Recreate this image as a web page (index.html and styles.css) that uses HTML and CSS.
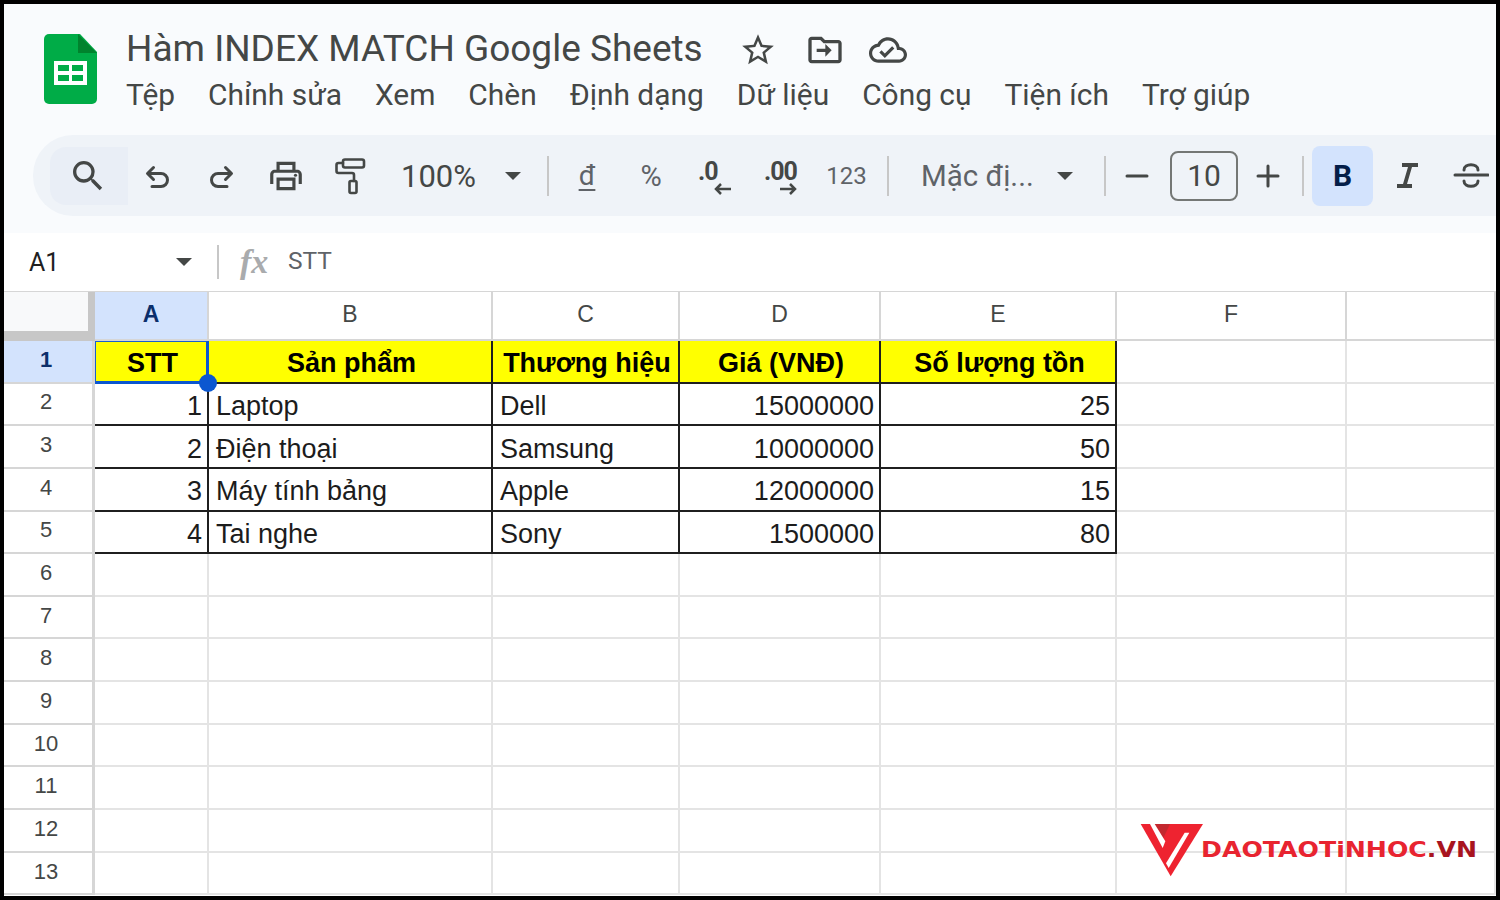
FILE: index.html
```html
<!DOCTYPE html>
<html lang="vi">
<head>
<meta charset="utf-8">
<title>Hàm INDEX MATCH Google Sheets</title>
<link rel="stylesheet" href="styles.css">
</head>
<body>
<div class="frame">
  <header class="head">
    <svg class="logo" viewBox="0 0 53 70"><path fill="#00ac47" d="M5 0h31l17 18v47a5 5 0 0 1-5 5H5a5 5 0 0 1-5-5V5a5 5 0 0 1 5-5z"/><path fill="#00832d" d="M34 0l19 19H34z"/><path fill="#fff" d="M10 27h33v24H10z"/><path fill="#00ac47" d="M14 31h11v6H14zM28 31h11v6H28zM14 41h11v6H14zM28 41h11v6H28z"/></svg>
    <div class="titles">
      <div class="titlerow">
        <span class="doctitle">Hàm INDEX MATCH Google Sheets</span>
        <svg class="ticon star" viewBox="0 0 24 24"><path d="M22 9.24l-7.19-.62L12 2 9.19 8.63 2 9.24l5.46 4.73L5.82 21 12 17.27 18.18 21l-1.63-7.03L22 9.24zM12 15.4l-3.76 2.27 1-4.28-3.32-2.88 4.38-.38L12 6.1l1.71 4.04 4.38.38-3.32 2.88 1 4.28L12 15.4z"/></svg>
        <svg class="ticon folder" viewBox="0 0 24 24"><path d="M20 6h-8l-2-2H4c-1.1 0-2 .9-2 2v12c0 1.1.9 2 2 2h16c1.1 0 2-.9 2-2V8c0-1.1-.9-2-2-2zm0 12H4V6h5.170l2 2H20v10zM12.200 11.200H7v2h5.200V16l3.800-3.800-3.800-3.800z"/></svg>
        <svg class="ticon cloud" viewBox="0 0 24 24"><path d="M19.350 10.040C18.670 6.590 15.640 4 12 4 9.110 4 6.600 5.640 5.350 8.040 2.340 8.360 0 10.910 0 14c0 3.310 2.690 6 6 6h13c2.760 0 5-2.240 5-5 0-2.640-2.050-4.780-4.650-4.960zM19 18H6c-2.210 0-4-1.790-4-4 0-2.050 1.530-3.760 3.560-3.970l1.070-.11.5-.95C8.080 7.140 9.940 6 12 6c2.620 0 4.880 1.860 5.390 4.430l.3 1.500 1.530.11c1.560.1 2.780 1.410 2.780 2.960 0 1.650-1.350 3-3 3zm-9-3.820l-2.090-2.090L6.500 13.500 10 17l6.010-6.010-1.410-1.410z"/></svg>
      </div>
      <nav class="menu">
        <span>Tệp</span><span>Chỉnh sửa</span><span>Xem</span><span>Chèn</span><span>Định dạng</span><span>Dữ liệu</span><span>Công cụ</span><span>Tiện ích</span><span>Trợ giúp</span>
      </nav>
    </div>
  </header>

  <div class="toolbar-wrap">
    <div class="toolbar">
      <div class="searchbox"><svg class="ic30" viewBox="0 0 24 24"><path d="M15.500 14h-.79l-.28-.27A6.471 6.471 0 0 0 16 9.500 6.500 6.500 0 1 0 9.500 16c1.610 0 3.090-.59 4.230-1.570l.27.28v.79l5 4.990L20.490 19l-4.990-5zm-6 0C7.010 14 5 11.990 5 9.500S7.010 5 9.500 5 14 7.010 14 9.500 11.990 14 9.500 14z"/></svg></div>
      <div class="btn w60"><svg class="ic28 line" viewBox="0 0 28 28"><path d="M9.500 5.500 3.500 11.500 9.500 17.500M4 11.500H17a6.500 6.500 0 0 1 0 13H8"/></svg></div>
      <div class="btn w66"><svg class="ic28 line" viewBox="0 0 28 28"><path d="M18.500 5.500 24.500 11.500 18.500 17.500M24 11.500H11a6.500 6.500 0 0 0 0 13H20"/></svg></div>
      <div class="btn w64"><svg class="ic38" viewBox="0 0 24 24"><path d="M19 8h-1V3H6v5H5c-1.660 0-3 1.340-3 3v6h4v4h12v-4h4v-6c0-1.660-1.340-3-3-3zM8 5h8v3H8V5zm8 14H8v-4h8v4zm2-2v-4H6v4H4v-6c0-.55.45-1 1-1h14c.55 0 1 .45 1 1v6h-2z"/><circle cx="18" cy="11.500" r="1"/></svg></div>
      <div class="btn w64"><svg class="ic38 line roller" viewBox="0 0 38 38"><rect x="12" y="2.500" width="21" height="8" rx="2"/><path d="M12 6H7.500a2 2 0 0 0-2 2v6a2 2 0 0 0 2 2H21a2 2 0 0 1 2 2v6"/><rect x="18.500" y="24" width="7" height="12" rx="1.500"/></svg></div>
      <div class="zoomval">100%</div>
      <div class="caret c-zoom"></div>
      <div class="sep s1"></div>
      <div class="btn w64 symbol"><span class="dong">đ</span></div>
      <div class="btn w64 pct">%</div>
      <div class="btn w66 dec"><span class="dectext">.0</span><svg class="arrow al" viewBox="0 0 20 12"><path d="M18 6H3M8 1 3 6l5 5"/></svg></div>
      <div class="btn w64 dec"><span class="dectext">.00</span><svg class="arrow ar" viewBox="0 0 20 12"><path d="M2 6h15M12 1l5 5-5 5"/></svg></div>
      <div class="btn w66 num">123</div>
      <div class="sep s2"></div>
      <div class="fontname">Mặc đị...</div>
      <div class="caret c-font"></div>
      <div class="sep s3"></div>
      <div class="btn w62"><svg class="ic24 line" viewBox="0 0 24 24"><path d="M2 12h20"/></svg></div>
      <div class="fontsize">10</div>
      <div class="btn w60"><svg class="ic24 line" viewBox="0 0 24 24"><path d="M2 12h20M12 2v20"/></svg></div>
      <div class="sep s4"></div>
      <div class="bold">B</div>
      <div class="btn w68"><svg class="ic28" viewBox="0 0 28 28"><path d="M9 1h16v4h-6l-5 17h5v4H4v-4h6l5-17H9z"/></svg></div>
      <div class="btn w60"><svg class="ic36 line" viewBox="0 0 36 36"><path d="M2 17h33M11 12c0-7 14-7 14 0M25 23c0 7-14 7-14 0"/></svg></div>
    </div>
  </div>

  <div class="formula">
    <span class="cellref">A1</span>
    <div class="caret c-ref"></div>
    <div class="sep s5"></div>
    <span class="fx">fx</span>
    <span class="fval">STT</span>
  </div>

  <div class="sheet">
    <div class="corner"></div>
    <div class="ch sel">A</div><div class="ch">B</div><div class="ch">C</div><div class="ch">D</div><div class="ch">E</div><div class="ch">F</div><div class="ch"></div>

    <div class="rh sel">1</div>
    <div class="c th a1">STT<i class="handle"></i></div><div class="c th">Sản phẩm</div><div class="c th">Thương hiệu</div><div class="c th">Giá (VNĐ)</div><div class="c th">Số lượng tồn</div><div class="g"></div><div class="g"></div>

    <div class="rh">2</div>
    <div class="c r">1</div><div class="c">Laptop</div><div class="c">Dell</div><div class="c r">15000000</div><div class="c r">25</div><div class="g"></div><div class="g"></div>

    <div class="rh">3</div>
    <div class="c r">2</div><div class="c">Điện thoại</div><div class="c">Samsung</div><div class="c r">10000000</div><div class="c r">50</div><div class="g"></div><div class="g"></div>

    <div class="rh">4</div>
    <div class="c r">3</div><div class="c">Máy tính bảng</div><div class="c">Apple</div><div class="c r">12000000</div><div class="c r">15</div><div class="g"></div><div class="g"></div>

    <div class="rh">5</div>
    <div class="c r">4</div><div class="c">Tai nghe</div><div class="c">Sony</div><div class="c r">1500000</div><div class="c r">80</div><div class="g"></div><div class="g"></div>

    <div class="rh">6</div><div class="g"></div><div class="g"></div><div class="g"></div><div class="g"></div><div class="g"></div><div class="g"></div><div class="g"></div>
    <div class="rh">7</div><div class="g"></div><div class="g"></div><div class="g"></div><div class="g"></div><div class="g"></div><div class="g"></div><div class="g"></div>
    <div class="rh">8</div><div class="g"></div><div class="g"></div><div class="g"></div><div class="g"></div><div class="g"></div><div class="g"></div><div class="g"></div>
    <div class="rh">9</div><div class="g"></div><div class="g"></div><div class="g"></div><div class="g"></div><div class="g"></div><div class="g"></div><div class="g"></div>
    <div class="rh">10</div><div class="g"></div><div class="g"></div><div class="g"></div><div class="g"></div><div class="g"></div><div class="g"></div><div class="g"></div>
    <div class="rh">11</div><div class="g"></div><div class="g"></div><div class="g"></div><div class="g"></div><div class="g"></div><div class="g"></div><div class="g"></div>
    <div class="rh">12</div><div class="g"></div><div class="g"></div><div class="g"></div><div class="g"></div><div class="g"></div><div class="g"></div><div class="g"></div>
    <div class="rh">13</div><div class="g"></div><div class="g"></div><div class="g"></div><div class="g"></div><div class="g"></div><div class="g"></div><div class="g"></div>
  </div>

  <div class="brand">
    <svg class="brandmark" viewBox="0 0 360 192"><path fill="#ee2330" d="M20 18h187L110 175z"/><path fill="#c3282f" d="M62 18h46L88 60z"/><path fill="#fff" d="M48 18h14l32 52-8 20z"/><path fill="#fff" d="M152 44h14l-62 106-8-14z"/></svg>
    <span class="brandtext">DAOTAOTiNHOC<em>.VN</em></span>
  </div>
</div>
</body>
</html>
```
FILE: styles.css
```css
* { box-sizing: border-box; }
html, body { margin: 0; padding: 0; background: #000; }
.frame {
  position: relative;
  width: 1500px;
  height: 900px;
  border: 4px solid #000;
  background: #fff;
  overflow: hidden;
  font-family: Roboto, "Liberation Sans", sans-serif;
  color: #444746;
}
.head {
  display: flex;
  height: 131px;
  background: #f9fbfd;
  padding: 30px 0 0 40px;
}
.logo { width: 53px; height: 70px; flex: none; }
.titles { margin: -10px 0 0 29px; }
.titlerow { display: flex; align-items: center; height: 50px; }
.doctitle { font-size: 37px; line-height: 50px; color: #444746; width: 577px; white-space: nowrap; }
.ticon { fill: #444746; flex: none; }
.star { width: 38px; height: 38px; margin: 2px 0 0 36px; }
.folder { width: 40px; height: 40px; margin: 2px 0 0 28px; }
.cloud { width: 38px; height: 38px; margin: 2px 0 0 24px; }
.menu { display: flex; font-size: 29.9px; line-height: 38px; margin-top: 2px; color: #444746; white-space: nowrap; }
.menu span { margin-right: 33px; }

.toolbar-wrap { background: #f9fbfd; height: 98px; padding: 0 0 17px 29px; }
.toolbar {
  display: flex;
  align-items: center;
  height: 81px;
  padding-left: 17px;
  background: #eff3f8;
  border-radius: 40px 0 0 40px;
  white-space: nowrap;
}
.searchbox { width: 78px; height: 58px; background: #e9eef6; border-radius: 16px 0 0 16px; display: flex; align-items: center; justify-content: center; flex: none; }
.btn { display: flex; align-items: center; justify-content: center; flex: none; height: 58px; position: relative; }
.w60 { width: 60px; } .w62 { width: 62px; } .w64 { width: 64px; } .w66 { width: 66px; } .w68 { width: 68px; }
svg { display: block; }
.ic24 { width: 24px; height: 24px; }
.ic28 { width: 28px; height: 28px; fill: #444746; }
.ic30 { width: 40px; height: 40px; fill: #444746; margin-left: -3px; }
.ic36 { width: 36px; height: 36px; }
.ic38 { width: 38px; height: 38px; fill: #444746; }
.line { fill: none; stroke: #444746; stroke-width: 3px; stroke-linecap: round; stroke-linejoin: round; }
.roller { stroke-width: 2.6px; }
.zoomval { font-size: 31px; margin: 2px 0 0 19px; width: 75px; flex: none; }
.caret { width: 0; height: 0; border-left: 8px solid transparent; border-right: 8px solid transparent; border-top: 8px solid #444746; flex: none; }
.c-zoom { margin-left: 29px; }
.sep { width: 2px; flex: none; background: #c7c7c7; height: 40px; }
.s1 { margin-left: 26px; margin-right: 6px; }
.symbol { font-size: 28px; color: #5f6368; }
.pct { font-size: 29px; color: #5f6368; }
.dong { text-decoration: underline; text-underline-offset: 4px; text-decoration-thickness: 2px; }
.dec { display: block; }
.dectext { position: absolute; left: 15px; top: 10px; font-size: 25px; line-height: 30px; letter-spacing: -1px; font-weight: 700; color: #444746; }
.arrow { position: absolute; top: 36px; width: 20px; height: 12px; fill: none; stroke: #444746; stroke-width: 2.5px; }
.al { left: 30px; }
.ar { left: 29px; }
.num { font-size: 24px; color: #5f6368; padding-left: 1px; }
.s2 { margin-left: 8px; }
.fontname { font-size: 29.500px; margin-left: 32px; width: 110px; flex: none; color: #5f6368; }
.c-font { margin-left: 26px; }
.s3 { margin-left: 31px; }
.fontsize { width: 68px; height: 50px; flex: none; border: 2px solid #747775; border-radius: 8px; font-size: 30px; text-align: center; line-height: 46px; margin-left: 2px; margin-right: 0; }
.s4 { margin-left: 4px; }
.bold { width: 61px; height: 60px; flex: none; margin-left: 8px; background: #d3e3fd; border-radius: 8px; color: #041e49; font-size: 30px; font-weight: 700; text-align: center; line-height: 60px; }

.formula { display: flex; align-items: center; height: 58px; background: #fff; padding-left: 25px; }
.cellref { font-size: 25px; width: 147px; color: #1f1f1f; flex: none; }
.s5 { height: 34px; margin-left: 25px; }
.fx { font-family: "Liberation Serif", serif; font-style: italic; font-weight: 700; font-size: 34px; color: #a9abad; margin-left: 21px; width: 48px; flex: none; }
.fval { font-size: 24.500px; color: #5f6368; margin-top: -3px; }

.sheet {
  display: grid;
  grid-template-columns: 91px 114px 284px 187px 201px 236px 230px 1fr;
  grid-template-rows: 49px repeat(13, 42.65px);
  border-top: 1px solid #d6d6d6;
  height: 604px;
  overflow: hidden;
  font-family: "Liberation Sans", Arial, sans-serif;
}
.corner { background: #f8f9fa; border-right: 7px solid #c7c7c7; border-bottom: 10px solid #c7c7c7; }
.ch { display: flex; align-items: center; justify-content: center; font-size: 23px; color: #444746; border-right: 2px solid #d6d6d6; border-bottom: 2px solid #d6d6d6; padding-bottom: 3px; }
.ch.sel { background: #d3e3fd; color: #0b2f6b; font-weight: 700; }
.rh { display: flex; align-items: center; justify-content: center; font-size: 22px; color: #444746; border-right: 3px solid #d6d6d6; border-bottom: 2px solid #d6d6d6; padding: 0 4px 3px 0; }
.rh.sel { background: #d3e3fd; color: #0b2f6b; font-weight: 700; }
.g { border-right: 2px solid #e4e4e4; border-bottom: 2px solid #e4e4e4; }
.c {
  position: relative;
  display: flex;
  align-items: center;
  font-size: 27px;
  color: #1c1c1c;
  padding: 5px 5px 0 7px;
  border-right: 2px solid #1f1f1f;
  border-bottom: 2px solid #1f1f1f;
  white-space: nowrap;
}
.r { justify-content: flex-end; }
.th { justify-content: center; background: #ffff00; font-weight: 700; color: #000; padding: 4px 0 0 3px; }
.a1 { border: 1px solid #1a5fd0; border-right: 3px solid #0b57d0; border-bottom: 3px solid #0b57d0; }
.handle {
  position: absolute;
  right: -11px;
  bottom: -11px;
  width: 18px;
  height: 18px;
  background: #0b57d0;
  border-radius: 50%;
  z-index: 2;
}
.brand { position: absolute; left: 1130px; top: 815px; display: flex; align-items: flex-start; }
.brandmark { width: 120px; height: 64px; margin-top: -1px; }
.brandtext {
  position: absolute;
  left: 67px;
  top: 19px;
  font-family: "DejaVu Sans", sans-serif;
  font-weight: 700;
  font-size: 22px;
  line-height: 24px;
  color: #e82430;
  white-space: nowrap;
  transform: scaleX(1.145);
  transform-origin: left center;
}
.brandtext em { font-style: normal; color: #a8141f; }
```
